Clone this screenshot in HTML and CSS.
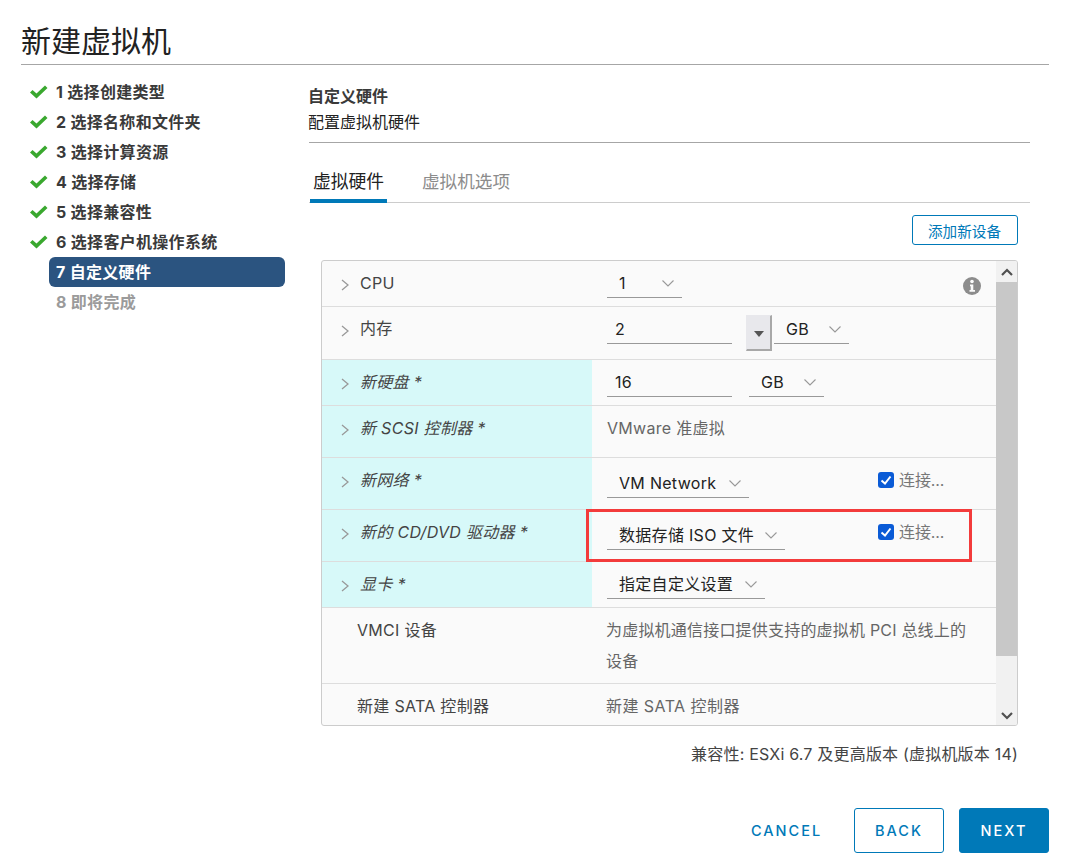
FILE: index.html
```html
<!DOCTYPE html>
<html lang="zh-CN">
<head>
<meta charset="utf-8">
<title>新建虚拟机</title>
<link rel="stylesheet" href="styles.css">
</head>
<body>
<div class="page">
  <h1 class="title">新建虚拟机</h1>
  <div class="wizard">
    <ul class="steps">
      <li class="step"><svg class="check" viewBox="0 0 18 14"><path d="M0 7.500 2.500 5 6.500 8.500 15 .5 17.500 3 6.500 13.500z" /></svg><span class="step-label">1 选择创建类型</span></li>
      <li class="step"><svg class="check" viewBox="0 0 18 14"><path d="M0 7.500 2.500 5 6.500 8.500 15 .5 17.500 3 6.500 13.500z" /></svg><span class="step-label">2 选择名称和文件夹</span></li>
      <li class="step"><svg class="check" viewBox="0 0 18 14"><path d="M0 7.500 2.500 5 6.500 8.500 15 .5 17.500 3 6.500 13.500z" /></svg><span class="step-label">3 选择计算资源</span></li>
      <li class="step"><svg class="check" viewBox="0 0 18 14"><path d="M0 7.500 2.500 5 6.500 8.500 15 .5 17.500 3 6.500 13.500z" /></svg><span class="step-label">4 选择存储</span></li>
      <li class="step"><svg class="check" viewBox="0 0 18 14"><path d="M0 7.500 2.500 5 6.500 8.500 15 .5 17.500 3 6.500 13.500z" /></svg><span class="step-label">5 选择兼容性</span></li>
      <li class="step"><svg class="check" viewBox="0 0 18 14"><path d="M0 7.500 2.500 5 6.500 8.500 15 .5 17.500 3 6.500 13.500z" /></svg><span class="step-label">6 选择客户机操作系统</span></li>
      <li class="step step-active"><span class="step-label">7 自定义硬件</span></li>
      <li class="step step-todo"><span class="step-label">8 即将完成</span></li>
    </ul>
    <main class="content">
      <header class="head">
        <div class="head-title">自定义硬件</div>
        <div class="head-sub">配置虚拟机硬件</div>
      </header>
      <nav class="tabs">
        <span class="tab tab-on">虚拟硬件</span>
        <span class="tab">虚拟机选项</span>
      </nav>
      <div class="inner">
        <div class="toolbar"><button class="add-btn">添加新设备</button></div>
        <div class="grid">
          <div class="rows">
            <div class="row h46">
              <div class="lab"><svg class="chev" viewBox="0 0 8 12"><path d="M1 1 7 6 1 11"/></svg><span>CPU</span></div>
              <div class="val pt9">
                <div class="sel w75"><span>1</span><svg class="caret" viewBox="0 0 12 7"><path d="M.5.5 6 6 11.500.5"/></svg></div>
                <svg class="info" viewBox="0 0 18 18"><circle cx="9" cy="9" r="9"/><circle class="info-i" cx="9" cy="4.500" r="1.800"/><path class="info-i" d="M7 7.500h3.300V13H12v1.800H6.500V13h1.200V9.200H7z"/></svg>
              </div>
            </div>
            <div class="row h53">
              <div class="lab"><svg class="chev" viewBox="0 0 8 12"><path d="M1 1 7 6 1 11"/></svg><span>内存</span></div>
              <div class="val pt9">
                <div class="sel w125"><span class="flat">2</span></div>
                <div class="spin"><svg viewBox="0 0 10 6"><path d="M0 0h10L5 6z"/></svg></div>
                <div class="sel w75"><span>GB</span><svg class="caret" viewBox="0 0 12 7"><path d="M.5.5 6 6 11.500.5"/></svg></div>
              </div>
            </div>
            <div class="row h46 new">
              <div class="lab"><svg class="chev" viewBox="0 0 8 12"><path d="M1 1 7 6 1 11"/></svg><span>新硬盘 *</span></div>
              <div class="val pt9">
                <div class="sel w125"><span class="flat">16</span></div>
                <div class="sel w75 ml17"><span>GB</span><svg class="caret" viewBox="0 0 12 7"><path d="M.5.5 6 6 11.500.5"/></svg></div>
              </div>
            </div>
            <div class="row h52 new">
              <div class="lab"><svg class="chev" viewBox="0 0 8 12"><path d="M1 1 7 6 1 11"/></svg><span>新 SCSI 控制器 *</span></div>
              <div class="val pt9 muted">VMware 准虚拟</div>
            </div>
            <div class="row h52 new">
              <div class="lab"><svg class="chev" viewBox="0 0 8 12"><path d="M1 1 7 6 1 11"/></svg><span>新网络 *</span></div>
              <div class="val pt9">
                <div class="sel w142 top"><span>VM Network</span><svg class="caret" viewBox="0 0 12 7"><path d="M.5.5 6 6 11.500.5"/></svg></div>
                <label class="conn"><span class="box"><svg viewBox="0 0 16 16"><path d="M3.500 8.500 7 11.500 12.500 4.500"/></svg></span>连接...</label>
              </div>
            </div>
            <div class="row h52 new">
              <div class="lab"><svg class="chev" viewBox="0 0 8 12"><path d="M1 1 7 6 1 11"/></svg><span>新的 CD/DVD 驱动器 *</span></div>
              <div class="val pt9">
                <div class="sel w178 top"><span>数据存储 ISO 文件</span><svg class="caret" viewBox="0 0 12 7"><path d="M.5.5 6 6 11.500.5"/></svg></div>
                <label class="conn"><span class="box"><svg viewBox="0 0 16 16"><path d="M3.500 8.500 7 11.500 12.500 4.500"/></svg></span>连接...</label>
              </div>
              <div class="mark"></div>
            </div>
            <div class="row h46 new">
              <div class="lab"><svg class="chev" viewBox="0 0 8 12"><path d="M1 1 7 6 1 11"/></svg><span>显卡 *</span></div>
              <div class="val pt9">
                <div class="sel w158"><span>指定自定义设置</span><svg class="caret" viewBox="0 0 12 7"><path d="M.5.5 6 6 11.500.5"/></svg></div>
              </div>
            </div>
            <div class="row h76 plain">
              <div class="lab">VMCI 设备</div>
              <div class="val muted desc">为虚拟机通信接口提供支持的虚拟机 PCI 总线上的设备</div>
            </div>
            <div class="row h42 plain last">
              <div class="lab">新建 SATA 控制器</div>
              <div class="val muted sata">新建 SATA 控制器</div>
            </div>
          </div>
          <div class="bar">
            <div class="bar-btn"><svg viewBox="0 0 12 8"><path d="M1 7 6 2l5 5"/></svg></div>
            <div class="thumb"></div>
            <div class="bar-rest"><svg viewBox="0 0 12 8"><path d="M1 1l5 5 5-5"/></svg></div>
          </div>
        </div>
        <div class="compat">兼容性: ESXi 6.7 及更高版本 (虚拟机版本 14)</div>
      </div>
    </main>
  </div>
  <footer class="foot">
    <button class="btn btn-link">CANCEL</button>
    <button class="btn btn-out">BACK</button>
    <button class="btn btn-fill">NEXT</button>
  </footer>
</div>
</body>
</html>
```
FILE: styles.css
```css
* { box-sizing: border-box; }
html, body { margin: 0; padding: 0; background: #fff; }
body { font-family: Inter, "Noto Sans CJK SC", sans-serif; color: #333; overflow: hidden; }
.page { width: 1069px; height: 854px; padding: 0 20px 0 21px; position: relative; display: flex; flex-direction: column; }
.title { margin: 0; height: 65px; padding-top: 20px; border-bottom: 1px solid #a6a6a6; font-size: 30px; line-height: 42px; font-weight: 400; color: #222; }
.wizard { display: flex; height: 743px; }
.steps { list-style: none; margin: 12px 0 0; padding: 0; width: 264px; flex: none; }
.step { height: 30px; display: flex; align-items: center; position: relative; padding-left: 28px; font-size: 16px; font-weight: 700; color: #3a3a3a; letter-spacing: .3px; }
.step-label { padding-left: 7px; line-height: 30px; flex: 1; border-radius: 6px; }
.check { position: absolute; left: 9px; top: 8px; width: 18px; height: 14px; fill: #3aa82f; }
.step-active .step-label { background: #2b5480; color: #fff; }
.step-todo { color: #9b9b9b; }
.content { margin-left: 24px; width: 721px; flex: none; }
.head { height: 78px; padding-top: 20px; border-bottom: 1px solid #a6a6a6; }
.head-title { font-size: 16px; line-height: 22px; font-weight: 700; color: #3a3a3a; margin-left: -1px; }
.head-sub { font-size: 16px; line-height: 24px; margin: 3px 0 0 -1px; color: #222; }
.tabs { height: 60px; display: flex; align-items: flex-end; border-bottom: 1px solid #ccc; padding-left: 1px; gap: 32px; }
.tab { font-size: 17.600px; line-height: 24px; height: 35px; padding: 3px 3px 0; color: #8c8c8c; }
.tab-on { color: #222; border-bottom: 4px solid #0079b8; height: 36px; margin-bottom: -1px; font-size: 17.750px; }
.inner { padding: 12px 12px 0; }
.toolbar { display: flex; justify-content: flex-end; }
.add-btn { width: 106px; height: 30px; padding: 0 1px 0 0; background: #fff; border: 1px solid #0079b8; border-radius: 3px; color: #0079b8; font: 14.600px Inter, "Noto Sans CJK SC", sans-serif; }
.grid { margin-top: 15px; height: 466px; display: flex; border: 1px solid #ccc; border-radius: 3px; background: #fafafa; overflow: hidden; }
.rows { flex: 1; min-width: 0; position: relative; }
.row { display: grid; grid-template-columns: 270px 1fr; border-bottom: 1px solid #ddd; position: relative; font-size: 16px; letter-spacing: .3px; }
.last { border-bottom: 0; }
.h46 { height: 46px; } .h53 { height: 53px; } .h52 { height: 52px; } .h76 { height: 76px; } .h42 { height: 42px; }
.lab { display: flex; align-items: flex-start; padding: 12px 0 0 19px; color: #444; line-height: 21px; gap: 11px; }
.h53 .lab { padding-top: 11px; }
.h53 .chev { margin-top: 7px; }
.new .lab { background: #d7f9f9; font-style: italic; }
.plain .lab { padding: 12px 0 0 35px; }
.chev { width: 8px; height: 12px; margin-top: 6px; fill: none; stroke: #999; stroke-width: 1.300; flex: none; }
.val { padding-left: 15px; display: flex; align-items: flex-start; position: relative; color: #222; }
.pt9 { padding-top: 9px; line-height: 26px; }
.muted { color: #666; }
.plain .muted { display: block; padding: 7px 20px 0 14px; line-height: 31px; }
.desc { letter-spacing: .2px; }
.row .sata { letter-spacing: .45px; }
.sel { height: 28px; border-bottom: 1px solid #999; display: flex; align-items: center; justify-content: space-between; padding: 0 8px 0 12px; color: #222; flex: none; line-height: 26px; }
.sel span { margin-bottom: 2px; }
.flat { margin-left: -4px; }
.w75 { width: 75px; } .w125 { width: 125px; } .w142 { width: 142px; } .w178 { width: 178px; } .w158 { width: 158px; }
.top { margin-top: 3px; }
.ml17 { margin-left: 17px; }
.caret { width: 12px; height: 7px; fill: none; stroke: #999; stroke-width: 1.100; }
.spin { width: 26px; height: 36px; margin: -1px 2px 0 14px; background: #e8e8ec; border: 1px solid #e8e8ec; border-right: 2px solid #a8a8a8; border-bottom: 2px solid #a8a8a8; display: flex; align-items: center; justify-content: center; }
.spin svg { width: 10px; height: 6px; fill: #555; margin-top: 2px; }
.info { position: absolute; left: 371px; top: 16px; width: 18px; height: 18px; fill: #8c8c8c; }
.info-i { fill: #fafafa; }
.conn { position: absolute; left: 286px; top: 9px; display: flex; align-items: center; gap: 5px; color: #777; font-size: 16px; letter-spacing: -.1px; line-height: 26px; }
.box { width: 16px; height: 16px; background: #0a5bd6; border-radius: 3px; display: block; }
.box svg { display: block; width: 16px; height: 16px; fill: none; stroke: #fff; stroke-width: 2; }
.mark { position: absolute; left: 264px; top: -1px; width: 386px; height: 53px; border: 3px solid #f33b3b; }
.bar { width: 21px; flex: none; display: flex; flex-direction: column; background: #f1f1f1; }
.bar svg { width: 12px; height: 8px; fill: none; stroke: #505050; stroke-width: 2.200; display: block; }
.bar-btn { height: 21px; display: flex; align-items: center; justify-content: center; }
.thumb { height: 374px; background: #c8c8c8; }
.bar-rest { flex: 1; display: flex; align-items: flex-end; justify-content: center; padding-bottom: 5px; }
.compat { margin-top: 16px; text-align: right; font-size: 16px; letter-spacing: .2px; line-height: 24px; color: #444; }
.foot { display: flex; justify-content: flex-end; align-items: flex-start; }
.btn { height: 45px; font: 500 14.500px Inter, sans-serif; letter-spacing: 2px; border-radius: 3px; border: 1px solid #0079b8; color: #0079b8; background: #fff; padding: 0; }
.btn-link { border: 0; width: 71px; margin-right: 32px; }
.btn-out { width: 90px; margin-right: 15px; }
.btn-fill { width: 90px; background: #0079b8; color: #fff; }
```
